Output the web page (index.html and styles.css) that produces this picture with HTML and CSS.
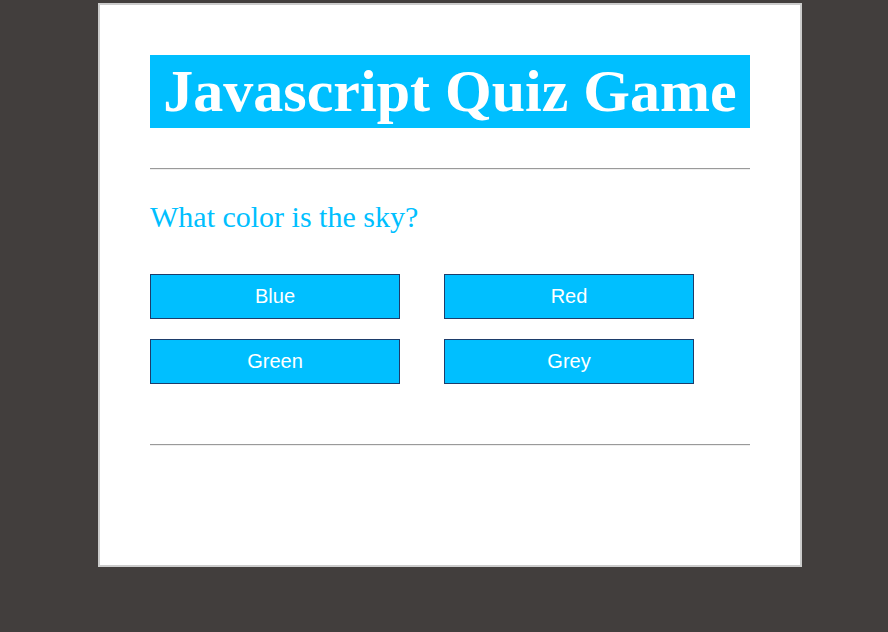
FILE: index.html
```html
<!DOCTYPE html>
<html>
<head>
<meta charset="utf-8">
<link rel="stylesheet" href="styles.css">
</head>
<body>
<div class="card">
  <h1 class="title">Javascript Quiz Game</h1>
  <hr class="rule rule-top">
  <div class="question">What color is the sky?</div>
  <div class="answers">
    <button class="answer">Blue</button>
    <button class="answer">Red</button>
    <button class="answer">Green</button>
    <button class="answer">Grey</button>
  </div>
  <hr class="rule rule-bottom">
  <div class="score"></div>
</div>
</body>
</html>
```
FILE: styles.css
```css
html, body {
  margin: 0;
  padding: 0;
  background: #423e3d;
}
body {
  padding-top: 3px;
  font-family: "Liberation Serif", "Times New Roman", serif;
}
.card {
  box-sizing: border-box;
  width: 704px;
  height: 564px;
  margin-left: 98px;
  background: #ffffff;
  border: 2px solid #cccccc;
  padding: 50px;
}
.title {
  margin: 0;
  background: #00bfff;
  color: #ffffff;
  font-size: 60px;
  font-weight: bold;
  line-height: 73px;
  height: 73px;
  text-align: center;
}
.rule {
  margin: 0;
  border: 0;
  border-top: 1px solid #9a9a9a;
  border-bottom: 1px solid #eeeeee;
  height: 0;
}
.rule-top {
  margin-top: 40px;
}
.question {
  margin-top: 30px;
  color: #00bfff;
  font-size: 30px;
  line-height: 34px;
}
.answers {
  margin-top: 40px;
  display: grid;
  grid-template-columns: 250px 250px;
  column-gap: 44px;
  row-gap: 20px;
}
.answer {
  box-sizing: border-box;
  width: 250px;
  height: 45px;
  margin: 0;
  padding: 0;
  background: #00bfff;
  border: 1px solid #1d3d6b;
  color: #ffffff;
  font-family: "Liberation Sans", Arial, sans-serif;
  font-size: 20px;
  text-align: center;
}
.rule-bottom {
  margin-top: 60px;
}
```
